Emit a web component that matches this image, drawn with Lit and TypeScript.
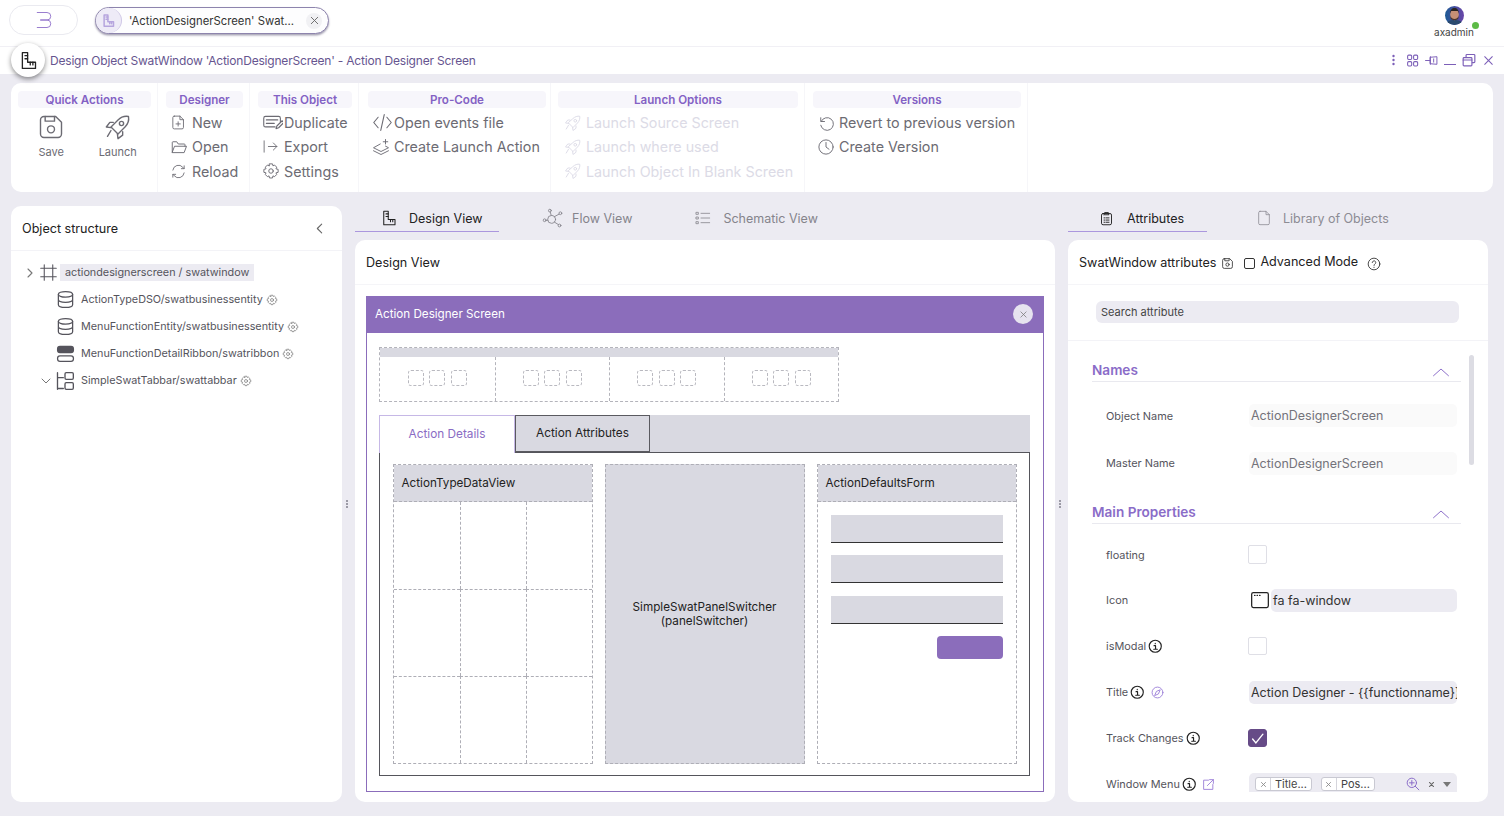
import { LitElement, html, css, svg, nothing } from "lit";
import { customElement } from "lit/decorators.js";

const P: Record<string, any> = {
  ruler: svg`<path d="M5 3h6v11h9v7H5z"/><path d="M8 6.500h3M8 10h3M14 14v3M17 14v3"/>`,
  save: svg`<path d="M6 3h10l5 5v10a3 3 0 0 1-3 3H6a3 3 0 0 1-3-3V6a3 3 0 0 1 3-3z"/><path d="M7 3v4h8V3"/><circle cx="12" cy="14" r="3"/>`,
  rocket: svg`<path d="M12 6c2.500-2.500 6-3.500 9-3 .5 3-.5 6.500-3 9l-6 6-6-6z"/><circle cx="15" cy="9" r="1.800"/><path d="M8 8H5l-3 4 4 .5M16 16v3l-4 3-.5-4M6 15l-3 5"/>`,
  file: svg`<path d="M6 3h8l5 5v11a2 2 0 0 1-2 2H6a2 2 0 0 1-2-2V5a2 2 0 0 1 2-2z"/><path d="M14 3v5h5M11.500 11v6M8.500 14h6"/>`,
  folder: svg`<path d="M3 19V6a1 1 0 0 1 1-1h5l2 3h8a1 1 0 0 1 1 1v2"/><path d="M3 19l3-8h16l-3 8z"/>`,
  reload: svg`<path d="M4 10a8 8 0 0 1 14-4l2 2M20 4v4h-4M20 14a8 8 0 0 1-14 4l-2-2M4 20v-4h4"/>`,
  dup: svg`<path d="M21 11V7a2 2 0 0 0-2-2H4a2 2 0 0 0-2 2v8a2 2 0 0 0 2 2h11"/><path d="M5 9h13M5 13h9M16 19l1-3 6-6 2 2-6 6z"/>`,
  export: svg`<path d="M3 4v16M9 12h12M16 7l5 5-5 5"/>`,
  gear: svg`<path d="M10 2.500h4l.6 2.600 2.200-1 2.800 2.800-1 2.200 2.900.7v4l-2.900.7 1 2.200-2.800 2.800-2.200-1-.6 2.800h-4l-.6-2.800-2.200 1-2.800-2.800 1-2.200-2.900-.7v-4l2.900-.7-1-2.200 2.800-2.800 2.200 1z"/><circle cx="12" cy="12" r="3"/>`,
  code: svg`<path d="M7 6l-5 6 5 6M17 6l5 6-5 6M14 3l-4 18"/>`,
  layers: svg`<path d="M11 8L2 13l10 5 10-5-4-2.200"/><path d="M2 17l10 5 10-5"/><path d="M18 2v6M15 5h6"/>`,
  revert: svg`<path d="M5 5v5h5"/><path d="M5.500 10A8.500 8.500 0 1 1 5 15"/>`,
  clock: svg`<circle cx="12" cy="12" r="9.500"/><path d="M12 6v6l4 3"/>`,
  flow: svg`<circle cx="3" cy="14" r="1.600"/><circle cx="9" cy="3" r="1.600"/><circle cx="21" cy="6" r="1.600"/><circle cx="20" cy="20" r="1.600"/><circle cx="11" cy="13" r="4.500"/><path d="M4.600 14h2M9.500 4.600l1 4M19.500 7l-5.500 3M18.800 19l-4.800-3"/>`,
  list: svg`<path d="M9 5h13M9 12h13M9 19h13"/><rect x="2" y="3.500" width="3" height="3"/><rect x="2" y="10.500" width="3" height="3"/><rect x="2" y="17.500" width="3" height="3"/>`,
  clip: svg`<rect x="4" y="4" width="16" height="18" rx="2.500"/><path d="M9 4V2.500h6V4l1 2H8zM8 11h1M11 11h5M8 14.500h1M11 14.500h5M8 18h1M11 18h5"/>`,
  doc: svg`<path d="M6 2h9l5 5v13a2 2 0 0 1-2 2H6a2 2 0 0 1-2-2V4a2 2 0 0 1 2-2z"/><path d="M15 2v5h5"/>`,
  frame: svg`<path d="M6 1v22M18 1v22M1 6h22M1 18h22"/>`,
  db: svg`<ellipse cx="12" cy="5.500" rx="9" ry="3.500"/><path d="M3 5.500v13c0 2 4 3.500 9 3.500s9-1.500 9-3.500v-13M3 12c0 2 4 3.500 9 3.500s9-1.500 9-3.500"/>`,
  ribbon: svg`<rect x="2" y="3" width="20" height="8" rx="3" fill="currentColor"/><rect x="2" y="15" width="20" height="7" rx="3"/>`,
  tabbar: svg`<path d="M3 2v20M3 8h7M3 21h7"/><rect x="12" y="2" width="10" height="8" rx="1.500"/><rect x="12" y="14" width="10" height="8" rx="1.500"/>`,
  chevR: svg`<path d="M8 4l8 8-8 8"/>`,
  chevL: svg`<path d="M16 4l-8 8 8 8"/>`,
  chevD: svg`<path d="M4 8l8 8 8-8"/>`,
  chevU: svg`<path d="M2 17l10-9 10 9"/>`,
  x: svg`<path d="M5 5l14 14M19 5L5 19"/>`,
  help: svg`<circle cx="12" cy="12" r="10"/><path d="M9 9.500a3 3 0 1 1 4.500 2.600c-1 .6-1.500 1.200-1.500 2.400M12 17.500v.5"/>`,
  info: svg`<circle cx="12" cy="12" r="10"/><path d="M10 11h2.500v6M9.500 17h6M12 7v.8"/>`,
  grid: svg`<rect x="3" y="2" width="7.500" height="8" rx="2"/><rect x="14" y="2" width="7.500" height="8" rx="2"/><rect x="3" y="14" width="7.500" height="8" rx="2"/><rect x="14" y="14" width="7.500" height="8" rx="2"/>`,
  pin: svg`<path d="M1 12h9M10 6l12-1v14l-12-1zM10 5v14M16 9v6"/>`,
  restore: svg`<rect x="2" y="8" width="15" height="14" rx="1.500"/><path d="M2 12h15M7 7V4a1.500 1.500 0 0 1 1.500-1.500h12A1.500 1.500 0 0 1 22 4v11a1.500 1.500 0 0 1-1.500 1.500H18"/>`,
  win: svg`<rect x="2" y="3" width="20" height="18" rx="2"/><path d="M5.500 6.500h.5M8.500 6.500h.5M11.500 6.500h.5"/>`,
  compass: svg`<circle cx="12" cy="12" r="10"/><path d="M7 17l3-7 7-3-3 7z"/>`,
  ext: svg`<path d="M12 4H3v17h17v-9M14 3h7v7M21 3L10 14"/>`,
  zoomplus: svg`<circle cx="10" cy="10" r="8"/><path d="M16 16l6 6M10 6v8M6 10h8"/>`,
  logo: svg`<path d="M3 2h13a5 5 0 0 1 0 10H7h9a5 5 0 0 1 0 10H3"/>`,
};

const ic = (n: string, s: number, w = 1.5) =>
  html`<svg class="ic" width=${s} height=${s} viewBox="0 0 24 24" fill="none" stroke="currentColor" stroke-width=${w} stroke-linecap="round" stroke-linejoin="round">${P[n]}</svg>`;

@customElement("app-root")
export class AppRoot extends LitElement {
  static styles = css`
    :host { display: block; width: 1504px; height: 816px; overflow: hidden; background: #ecebf2; font-family: Inter, "Noto Sans", sans-serif; position: relative; color: #222; }
    * { box-sizing: border-box; }
    .ic { flex: none; display: block; }
    .top { height: 47px; background: #fff; border-bottom: 1px solid #f1f0f5; display: flex; align-items: flex-start; position: relative; }
    .logo { margin: 5px 0 0 9px; width: 69px; height: 30px; border: 1px solid #eaeaf0; border-radius: 15px; display: flex; align-items: center; justify-content: center; color: #8e6fc9; }
    .doc-tab { margin: 7px 0 0 17px; width: 234px; height: 27px; border: 1px solid #8d84ad; border-radius: 14px; box-shadow: 0 1.500px 2px rgba(60,50,90,.45); display: flex; align-items: center; background: #fdfdfe; font-size: 11.300px; color: #333; white-space: nowrap; }
    .doc-ic { width: 26px; height: 25px; border-radius: 50%; background: #eeebf7; display: flex; align-items: center; justify-content: center; color: #b6a5de; margin-right: 7px; border-right: 1px solid #cfc7e6; }
    .doc-tab span { flex: 1; }
    .doc-x { margin-right: 6px; width: 16px; height: 16px; border-radius: 50%; background: #f1f1f4; display: flex; align-items: center; justify-content: center; color: #666; }
    .user { position: absolute; right: 29px; top: 6px; width: 42px; display: flex; flex-direction: column; align-items: center; font-size: 10px; color: #444; line-height: 12px; }
    .user svg { margin-bottom: 1px; }
    .dot { position: absolute; left: 39px; top: 16px; width: 7px; height: 7px; border-radius: 50%; background: #5dbb46; }
    .title { height: 27px; background: #fff; display: flex; align-items: center; padding: 0 9px 1px 50px; font-size: 12px; color: #66558f; letter-spacing: -.2px; white-space: nowrap; }
    .title .sp { flex: 1; }
    .win-ctl { display: flex; align-items: center; color: #7c5fb8; }
    .float-ic { position: absolute; left: 11px; top: 43px; width: 34px; height: 34px; border-radius: 50%; background: #fff; box-shadow: 0 2px 5px rgba(0,0,0,.45); display: flex; align-items: center; justify-content: center; color: #222; }

    .ribbon { margin: 9px 11px 0; height: 109px; background: #fff; border-radius: 10px; display: flex; color: #6b6a72; }
    .sec { border-right: 1px solid #f6f6f9; padding: 8px 6px 0 8px; flex: none; }
    .s1 { padding-left: 7px; }
    .s4 { padding-left: 9px; padding-right: 4px; }
    .s5 { padding-left: 7px; }
    .pill { height: 17px; border-radius: 4px; background: #f7f6fb; color: #8361c4; font-size: 11.600px; font-weight: 600; line-height: 18px; text-align: center; margin-bottom: 3px; }
    .rit { height: 24.300px; display: flex; align-items: center; font-size: 14.300px; white-space: nowrap; color: #6c6b73; padding-left: 4px; position: relative; top: -0.500px; }
    .rit .bx { width: 22px; display: flex; align-items: center; flex: none; color: #6c6b73; }
    .rit.off, .rit.off .bx { color: #dcdbe6; }
    .s5 .rit { padding-left: 6px; }
    .big { display: flex; }
    .big div { width: 66.500px; display: flex; flex-direction: column; align-items: center; font-size: 11px; color: #6c6b73; gap: 4px; line-height: 14px; height: 60px; }
    .big svg { margin-top: 2px; }

    .main { display: flex; margin: 14px 16px 14px 11px; height: 596px; }
    .panel { background: #fff; border-radius: 10px; }
    .left { width: 331px; flex: none; }
    .lhead { height: 45px; border-bottom: 1px solid #f3f3f7; display: flex; align-items: center; justify-content: space-between; padding: 0 16px 0 11px; font-size: 12.600px; color: #222; }
    .lhead span + svg { color: #666; }
    .tree { padding-top: 8px; font-size: 10.800px; color: #55545c; }
    .trow { height: 27px; display: flex; align-items: center; white-space: nowrap; color: #55545c; }
    .tw { width: 9px; margin-right: 7px; }
    .sel { background: #ecebf2; margin-left: 3px; padding: 0 5px; height: 17px; line-height: 17px; }
    .tree .lab { margin-left: 6px; }
    .tree .gear { margin-left: 3px; color: #777; }
    .split { width: 13px; flex: none; display: flex; flex-direction: column; align-items: center; justify-content: center; gap: 1px; padding-right: 3px; }
    .split i { width: 2px; height: 2px; background: #9c9ba6; display: block; }
    .col { display: flex; flex-direction: column; flex: none; }
    .tabs { height: 26px; margin-bottom: 8px; display: flex; font-size: 12.500px; flex: none; }
    .tab { display: flex; align-items: center; color: #85848c; white-space: nowrap; height: 24px; }
    .tab.on { color: #222; border-bottom: 1.500px solid #ab97de; height: 26px; padding-bottom: 1px; }
    .pbody { flex: 1; min-height: 0; display: flex; flex-direction: column; }
    .phead { height: 45px; border-bottom: 1px solid #f5f5f8; display: flex; align-items: center; font-size: 12.600px; color: #222; flex: none; white-space: nowrap; }

    .dv { padding: 11px 11px 10px; flex: 1; min-height: 0; display: flex; }
    .window { flex: 1; border: 1px solid #8b6dbb; display: flex; flex-direction: column; }
    .wh { height: 36px; background: #8b6dbb; color: #fff; font-size: 11.650px; padding: 0 10px 2px 8px; display: flex; align-items: center; justify-content: space-between; flex: none; }
    .wx { width: 20px; height: 20px; border-radius: 50%; background: #e6e3ef; color: #777; display: flex; align-items: center; justify-content: center; }
    .wb { flex: 1; min-height: 0; padding: 14px 13px 15px 12px; display: flex; flex-direction: column; }
    .tb { width: 460px; height: 55px; flex: none; border: 1px dashed #b4b4bb; display: flex; flex-direction: column; margin-bottom: 13px; }
    .tb-top { height: 9px; background: #d9d9e1; flex: none; }
    .tb-cells { flex: 1; display: grid; grid-template-columns: repeat(4, 1fr); }
    .tb-cell { display: flex; align-items: center; justify-content: center; gap: 5.500px; border-left: 1px dashed #b4b4bb; padding: 0 0 2px 0; }
    .tb-cell:first-child { border-left: none; }
    .tb-cell i { width: 16px; height: 16px; border: 1px dashed #b9b9c0; border-radius: 3px; display: block; }
    .tset { flex: 1; min-height: 0; display: flex; flex-direction: column; }
    .tstrip { height: 36.500px; background: #d9d9e1; flex: none; display: flex; font-size: 11.800px; }
    .t1 { width: 136px; background: #fff; border: 1px solid #c6b8e6; border-bottom: none; color: #8a6cc4; display: flex; align-items: center; justify-content: center; position: relative; z-index: 1; height: 38px; padding-bottom: 2px; }
    .t2 { width: 135px; border: 1.500px solid #5a5a60; display: flex; align-items: center; justify-content: center; color: #222; }
    .tcontent { flex: 1; min-height: 0; border: 1.500px solid #55555b; padding: 11.500px 12px 11.500px 12.500px; display: grid; grid-template-columns: repeat(3, 200px); gap: 12px; }
    .c { border: 1px dashed #aeaeb6; display: flex; flex-direction: column; font-size: 11.700px; color: #222; min-height: 0; }
    .ch { height: 37px; flex: none; background: #d9d9e1; display: flex; align-items: center; padding-left: 8px; border-bottom: 1px dashed #aeaeb6; white-space: nowrap; }
    .cgrid { flex: 1; display: grid; grid-template-columns: repeat(3, 1fr); grid-template-rows: repeat(3, 1fr); }
    .cgrid i { border-left: 1px dashed #aeaeb6; border-top: 1px dashed #aeaeb6; display: block; }
    .cgrid i:nth-child(3n+1) { border-left: none; }
    .cgrid i:nth-child(-n+3) { border-top: none; }
    .c.sw { background: #d9d9e1; align-items: center; justify-content: center; text-align: center; line-height: 14px; }
    .form { padding: 13px 13px 0; display: flex; flex-direction: column; gap: 12.300px; }
    .fld { height: 28px; background: #d9d9e1; border-bottom: 1px solid #333; }
    .btn { width: 66px; height: 23px; background: #8b6dbb; border-radius: 4px; align-self: flex-end; }

    .rhead { padding-left: 11px; }
    .rhead .sv { margin: 3px 0 0 5px; color: #444; }
    .cb { width: 11px; height: 11px; border: 1px solid #333; border-radius: 2px; margin: 3px 5px 0 10px; flex: none; }
    .rhead .hp { margin: 3px 0 0 9px; color: #333; }
    .srch { height: 56px; border-bottom: 1px solid #f3f3f7; padding: 16px 29px 0 28px; flex: none; }
    .srch div { height: 22px; border-radius: 6px; background: #ecebf2; font-size: 11px; line-height: 22px; padding-left: 5px; color: #444; }
    .rb { flex: 1; min-height: 0; max-height: 451px; overflow: hidden; position: relative; padding: 18px 27px 0 24px; }
    .thumb { position: absolute; right: 14px; top: 14px; width: 5px; height: 110px; border-radius: 3px; background: #dcdce3; }
    .sh { height: 23px; border-bottom: 1px solid #e9e9ef; display: flex; justify-content: space-between; align-items: center; color: #8a6cc8; font-size: 13.600px; font-weight: 600; padding: 0 11px 0 0; }
    .sh svg { margin-top: 4px; }
    .names { padding-top: 10px; margin-bottom: 14px; }
    .mp { padding-top: 8px; }
    .row { height: 46px; display: grid; grid-template-columns: 143px 208px; align-items: center; padding-left: 14px; font-size: 10.900px; color: #5e5d65; }
    .mp .row:first-child { height: 45px; }
    .names .row { height: 47.500px; }
    .lab2 { display: flex; align-items: center; gap: 2px; color: #55545c; white-space: nowrap; }
    .lab2 .nfo { color: #222; }
    .lab2 .pur { color: #9c80d8; margin-left: 4px; }
    .ro { height: 23px; border-radius: 5px; background: #fafafa; font-size: 12.500px; line-height: 23px; padding-left: 2px; color: #74737b; white-space: nowrap; overflow: hidden; }
    .inp { height: 23px; border-radius: 5px; background: #ecebf2; font-size: 12.500px; line-height: 23px; padding-left: 2px; color: #333; white-space: nowrap; overflow: hidden; }
    .ck { width: 18.500px; height: 18.500px; border: 1px solid #dfdfe6; border-radius: 2px; margin-left: -1px; }
    .ck.on { background: #664b87; border-color: #664b87; border-radius: 3px; color: #fff; display: flex; align-items: center; justify-content: center; }
    .icrow { display: flex; align-items: center; gap: 1px; padding-left: 1px; color: #222; }
    .icrow .inp { flex: 1; }
    .multi { height: 23px; border-radius: 5px; background: #ecebf2; display: flex; align-items: center; padding-left: 6px; color: #555; font-size: 11px; white-space: nowrap; }
    .chip { height: 14px; border: 1px solid #c9c9d2; background: #fff; border-radius: 3px; display: flex; align-items: center; color: #444; line-height: 12px; }
    .chip b { width: 15px; height: 12px; border-right: 1px solid #d5d5dc; display: flex; align-items: center; justify-content: center; color: #888; }
    .chip span { padding: 0 4px; }
    .chip2 { margin-left: 9px; }
    .mic { color: #8a6cc8; margin-left: 31px; }
    .mx { margin-left: 8px; color: #666; }
    .caret { margin-left: 8px; fill: #777; }
    .kb { margin-right: 11px; fill: currentColor; }
    .wc { margin-right: 6px; }
    .wc.min { margin: 9px 6px 0 0; width: 12px; height: 1.500px; background: currentColor; display: block; }
    .tick { fill: none; stroke: currentColor; stroke-width: 2.500; stroke-linecap: round; }
    .hd2 { margin-top: -1px; }
  `;

  private sec(w: number, title: string, items: any, cls = "") {
    return html`<div class="sec ${cls}" style="width:${w}px"><div class="pill">${title}</div>${items}</div>`;
  }
  private rit(icon: string, label: string, size = 16, off = false) {
    return html`<div class="rit ${off ? "off" : ""}"><div class="bx">${ic(icon, size, 1.250)}</div>${label}</div>`;
  }
  private treeRow(pad: number, icon: string, label: string, size = 19, twisty = false) {
    return html`<div class="trow" style="padding-left:${pad}px">${twisty ? html`<span style="margin-right:3px;color:#777">${ic("chevD", 12, 2)}</span>` : nothing}${ic(icon, size, 1.600)}<span class="lab">${label}</span><span class="gear">${ic("gear", 12, 1.400)}</span></div>`;
  }
  private row(label: any, val: any) {
    return html`<div class="row"><div class="lab2">${label}</div><div>${val}</div></div>`;
  }
  private nfo() {
    return html`<span class="nfo">${ic("info", 14.500, 1.900)}</span>`;
  }

  render() {
    const cell = html`<div class="tb-cell"><i></i><i></i><i></i></div>`;
    return html`
      <div class="top">
        <div class="logo">${ic("logo", 18, 1.200)}</div>
        <div class="doc-tab"><div class="doc-ic">${ic("ruler", 15, 2.400)}</div><span>'ActionDesignerScreen' Swat...</span><div class="doc-x">${ic("x", 11, 2)}</div></div>
        <div class="user">
          <svg width="19" height="19" viewBox="0 0 19 19"><defs><linearGradient id="av" x1="0" x2="1"><stop offset="0" stop-color="#1c5a94"/><stop offset="1" stop-color="#6a45a8"/></linearGradient><clipPath id="avc"><circle cx="9.500" cy="9.500" r="9.500"/></clipPath></defs><g clip-path="url(#avc)"><rect width="19" height="19" fill="url(#av)"/><path d="M1 20c0-5 4-6 8.500-6s8.500 1 8.500 6z" fill="#2b4a6e"/><ellipse cx="9.500" cy="8.500" rx="4.300" ry="5.800" fill="#c79075"/><path d="M5.200 7.500c-.3-3.500 2-5.500 4.300-5.500s4.600 2 4.300 5.500l-1-2.500h-6.600z" fill="#2b2420"/><path d="M5.500 10c1 4 7 4 8 0v2c-1 3-7 3-8 0z" fill="#4a362c"/></g></svg>
          <span>axadmin</span><i class="dot"></i>
        </div>
      </div>
      <div class="title">
        Design Object SwatWindow 'ActionDesignerScreen' - Action Designer Screen
        <span class="sp"></span>
        <div class="win-ctl">
          <svg class="kb" width="3" height="12" viewBox="0 0 3 12"><circle cx="1.500" cy="2" r="1.200"/><circle cx="1.500" cy="6" r="1.200"/><circle cx="1.500" cy="10" r="1.200"/></svg>
          <span class="wc">${ic("grid", 13, 2)}</span>
          <span class="wc">${ic("pin", 13, 1.800)}</span>
          <span class="wc min"></span>
          <span class="wc">${ic("restore", 14, 2)}</span>
          ${ic("x", 13, 2)}
        </div>
      </div>
      <div class="float-ic">${ic("ruler", 21, 1.500)}</div>

      <div class="ribbon">
        ${this.sec(147, "Quick Actions", html`<div class="big"><div>${ic("save", 28, 1.200)}Save</div><div>${ic("rocket", 28, 1.200)}Launch</div></div>`, "s1")}
        ${this.sec(92, "Designer", html`${this.rit("file", "New", 17)}${this.rit("folder", "Open", 18)}${this.rit("reload", "Reload", 17)}`)}
        ${this.sec(109, "This Object", html`${this.rit("dup", "Duplicate", 21)}${this.rit("export", "Export", 17)}${this.rit("gear", "Settings", 18)}`)}
        ${this.sec(192, "Pro-Code", html`${this.rit("code", "Open events file", 21)}${this.rit("layers", "Create Launch Action", 18)}`, "s4")}
        ${this.sec(254, "Launch Options", html`${this.rit("rocket", "Launch Source Screen", 18, true)}${this.rit("rocket", "Launch where used", 18, true)}${this.rit("rocket", "Launch Object In Blank Screen", 18, true)}`, "s5")}
        ${this.sec(223, "Versions", html`${this.rit("revert", "Revert to previous version", 18)}${this.rit("clock", "Create Version", 18)}`)}
      </div>

      <div class="main">
        <div class="panel left">
          <div class="lhead"><span>Object structure</span>${ic("chevL", 13, 2)}</div>
          <div class="tree">
            <div class="trow" style="padding-left:13px"><span class="tw" style="color:#777">${ic("chevR", 12, 2.200)}</span>${ic("frame", 17, 1.500)}<span class="sel">actiondesignerscreen / swatwindow</span></div>
            ${this.treeRow(45, "db", "ActionTypeDSO/swatbusinessentity")}
            ${this.treeRow(45, "db", "MenuFunctionEntity/swatbusinessentity")}
            ${this.treeRow(45, "ribbon", "MenuFunctionDetailRibbon/swatribbon")}
            ${this.treeRow(29, "tabbar", "SimpleSwatTabbar/swattabbar", 20, true)}
          </div>
        </div>
        <div class="split"><i></i><i></i><i></i></div>
        <div class="col" style="width:700px">
          <div class="tabs">
            <div class="tab on" style="width:144px;padding-left:25px;gap:11px">${ic("ruler", 18, 1.400)}Design View</div>
            <div class="tab" style="margin-left:43px;gap:9px">${ic("flow", 21, 1)}Flow View</div>
            <div class="tab" style="margin-left:63px;gap:12px">${ic("list", 16, 1.200)}Schematic View</div>
          </div>
          <div class="panel pbody">
            <div class="phead" style="padding-left:11px">Design View</div>
            <div class="dv">
              <div class="window">
                <div class="wh"><span>Action Designer Screen</span><div class="wx">${ic("x", 9, 2)}</div></div>
                <div class="wb">
                  <div class="tb"><div class="tb-top"></div><div class="tb-cells">${cell}${cell}${cell}${cell}</div></div>
                  <div class="tset">
                    <div class="tstrip"><div class="t1">Action Details</div><div class="t2">Action Attributes</div></div>
                    <div class="tcontent">
                      <div class="c"><div class="ch">ActionTypeDataView</div><div class="cgrid">${Array.from({ length: 9 }, () => html`<i></i>`)}</div></div>
                      <div class="c sw">SimpleSwatPanelSwitcher<br />(panelSwitcher)</div>
                      <div class="c"><div class="ch">ActionDefaultsForm</div><div class="form"><div class="fld"></div><div class="fld"></div><div class="fld"></div><div class="btn"></div></div></div>
                    </div>
                  </div>
                </div>
              </div>
            </div>
          </div>
        </div>
        <div class="split"><i></i><i></i><i></i></div>
        <div class="col" style="width:420px">
          <div class="tabs">
            <div class="tab on" style="width:139px;padding-left:31px;gap:13px">${ic("clip", 15, 1.500)}Attributes</div>
            <div class="tab" style="margin-left:49px;gap:11px;color:#8d8c94">${ic("doc", 16, 1.200)}Library of Objects</div>
          </div>
          <div class="panel pbody">
            <div class="phead rhead">SwatWindow attributes<span class="sv">${ic("save", 13, 1.700)}</span><span class="cb"></span><span class="hd2">Advanced Mode</span><span class="hp">${ic("help", 14, 1.500)}</span></div>
            <div class="srch"><div>Search attribute</div></div>
            <div class="rb">
              <div class="thumb"></div>
              <div class="sh">Names ${ic("chevU", 18, 1.300)}</div>
              <div class="names">
                ${this.row("Object Name", html`<div class="ro">ActionDesignerScreen</div>`)}
                ${this.row("Master Name", html`<div class="ro">ActionDesignerScreen</div>`)}
              </div>
              <div class="sh">Main Properties ${ic("chevU", 18, 1.300)}</div>
              <div class="mp">
                ${this.row("floating", html`<div class="ck"></div>`)}
                ${this.row("Icon", html`<div class="icrow">${ic("win", 20, 1.500)}<div class="inp">fa fa-window</div></div>`)}
                ${this.row(html`isModal ${this.nfo()}`, html`<div class="ck"></div>`)}
                ${this.row(html`Title ${this.nfo()}<span class="pur">${ic("compass", 13, 1.700)}</span>`, html`<div class="inp">Action Designer - {{functionname}}</div>`)}
                ${this.row(html`Track Changes ${this.nfo()}`, html`<div class="ck on"><svg class="tick" width="13" height="13" viewBox="0 0 24 24"><path d="M3 13l6 7L22 4"/></svg></div>`)}
                ${this.row(html`Window Menu ${this.nfo()}<span class="pur">${ic("ext", 13, 1.700)}</span>`, html`<div class="multi"><div class="chip"><b>${ic("x", 7, 3)}</b><span>Title...</span></div><div class="chip chip2"><b>${ic("x", 7, 3)}</b><span>Pos...</span></div><span class="mic">${ic("zoomplus", 14, 1.700)}</span><span class="mx">${ic("x", 7, 3.500)}</span><svg class="caret" width="8" height="5" viewBox="0 0 8 5"><path d="M0 0h8L4 5z"/></svg></div>`)}
              </div>
            </div>
          </div>
        </div>
      </div>
    `;
  }
}
